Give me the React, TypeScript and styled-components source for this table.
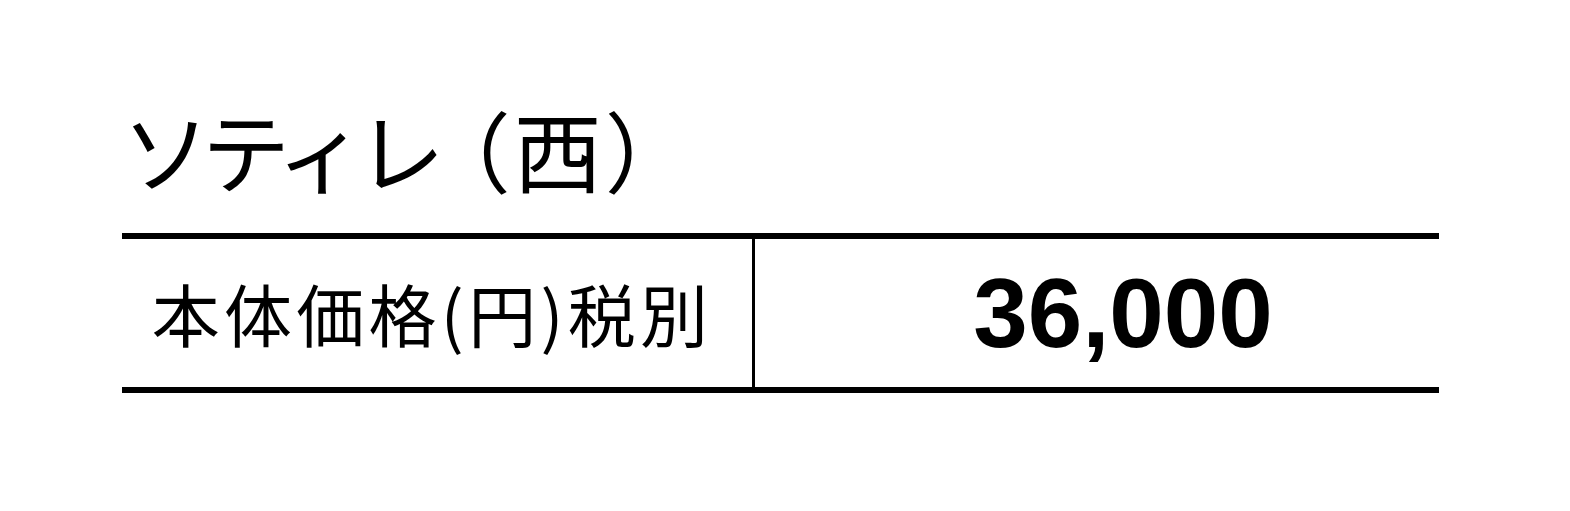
import React from 'react'
import styled, { createGlobalStyle } from 'styled-components'

const GlobalStyle = createGlobalStyle`
  html, body {
    margin: 0;
    padding: 0;
    background: #ffffff;
    color: #000000;
    font-family: 'Noto Sans CJK JP', 'Liberation Sans', sans-serif;
  }
`

const Page = styled.div`
  width: 1317px;
  margin-left: 122px;
  padding-top: 96px;
`

const Title = styled.h2`
  margin: 0;
  font-size: 88px;
  font-weight: 400;
  line-height: 104px;
  height: 137px;
  letter-spacing: -8px;
  white-space: nowrap;
`

const Area = styled.span`
  margin-left: -14px;
  letter-spacing: 3px;
`

const PriceTable = styled.div`
  border-top: 6px solid #000;
  border-bottom: 6px solid #000;
`

const Row = styled.div`
  display: grid;
  grid-template-columns: 630px 3px 1fr;
  height: 148px;
`

const Divider = styled.div`
  background: #000;
`

const Cell = styled.div<{ $shift?: number; $bold?: boolean }>`
  display: flex;
  align-items: center;
  justify-content: center;
  padding-left: ${(p) => Math.max(0, (p.$shift ?? 0) * 2)}px;
  padding-right: ${(p) => Math.max(0, -(p.$shift ?? 0) * 2)}px;
  font-family: ${(p) =>
    p.$bold
      ? "'Liberation Sans', Arial, sans-serif"
      : "'Noto Sans CJK JP', sans-serif"};
  font-weight: ${(p) => (p.$bold ? 700 : 400)};
  font-size: ${(p) => (p.$bold ? '98px' : '68px')};
  letter-spacing: ${(p) => (p.$bold ? '0' : '4.3px')};
  line-height: 1;
  white-space: nowrap;
`

export default function App() {
  return (
    <>
      <GlobalStyle />
      <Page>
        <Title>
          ソティレ<Area>（西）</Area>
        </Title>
        <PriceTable>
          <Row>
            <Cell $shift={-5}>本体価格(円)税別</Cell>
            <Divider />
            <Cell $bold $shift={26}>36,000</Cell>
          </Row>
        </PriceTable>
      </Page>
    </>
  )
}
